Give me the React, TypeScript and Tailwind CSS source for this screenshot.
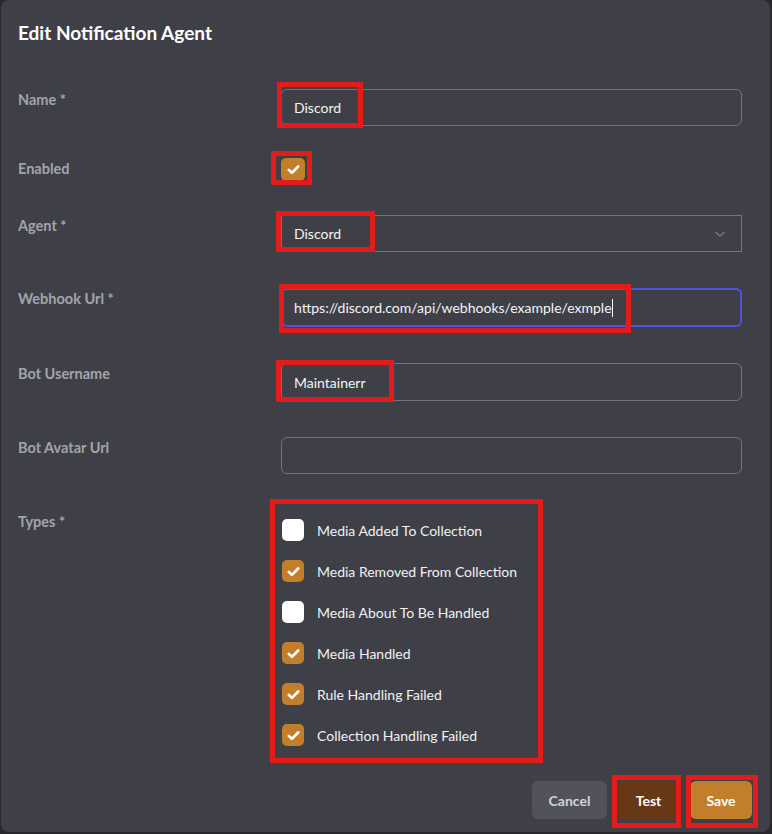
import React from "react";

const ORANGE = "bg-[#c27e2b]";

function Check({ size = "w-[22px] h-[22px]" }: { size?: string }) {
  return (
    <span className={`${size} ${ORANGE} rounded-[5px] flex items-center justify-center shrink-0`}>
      <svg width="15" height="15" viewBox="0 0 16 16" fill="none">
        <path d="M3 8.4 L6.3 11.6 L13 4.8" stroke="white" strokeWidth="2.9" strokeLinecap="round" strokeLinejoin="round" />
      </svg>
    </span>
  );
}

function Empty() {
  return <span className="w-[22px] h-[22px] bg-white rounded-[5px] shrink-0" />;
}

function Row({ label, className = "", children }: { label: string; className?: string; children: React.ReactNode }) {
  return (
    <div className={`flex ${className}`}>
      <label className="w-[263px] shrink-0 pt-[1px] text-[14.5px] leading-[19px] font-bold text-[#a3a3ab]">{label}</label>
      <div className="flex-1">{children}</div>
    </div>
  );
}

const types: [string, boolean][] = [
  ["Media Added To Collection", false],
  ["Media Removed From Collection", true],
  ["Media About To Be Handled", false],
  ["Media Handled", true],
  ["Rule Handling Failed", true],
  ["Collection Handling Failed", true],
];

// annotation boxes drawn over the screenshot
const marks = [
  "left-[277px] top-[82px] w-[86px] h-[46px]",
  "left-[271px] top-[151px] w-[41px] h-[34px]",
  "left-[276px] top-[211px] w-[99px] h-[41px]",
  "left-[279px] top-[284px] w-[352px] h-[49px]",
  "left-[276px] top-[360px] w-[118px] h-[42px]",
  "left-[270px] top-[499px] w-[273px] h-[264px]",
  "left-[612px] top-[775px] w-[69px] h-[53px]",
  "left-[686px] top-[775px] w-[72px] h-[53px]",
];

export default function App() {
  return (
    <div
      className="relative w-[772px] h-[834px] bg-[#27282c] overflow-hidden"
      style={{ fontFamily: "Lato, 'Noto Sans', sans-serif" }}
    >
      <div className="ml-[1px] w-[769px] h-[832px] bg-[#3f4047] rounded-[8px] pl-[17px] pr-[28px] flex flex-col">
        <h2 className="pt-[19px] text-[19px] leading-[27px] font-bold text-white">Edit Notification Agent</h2>

        <Row label="Name *" className="mt-[43px]">
          <div className="h-[37px] rounded-[6px] border border-[#74747c] px-[12px] flex items-center text-[14px] text-[#f4f4f5]">
            Discord
          </div>
        </Row>

        <Row label="Enabled" className="mt-[32px]">
          <Check size="w-[24px] h-[23px]" />
        </Row>

        <Row label="Agent *" className="mt-[34px]">
          <div className="h-[37px] border border-[#74747c] px-[12px] flex items-center justify-between text-[14px] text-[#f4f4f5]">
            <span>Discord</span>
            <svg width="12" height="12" viewBox="0 0 12 12" fill="none" className="mr-[3px]">
              <path d="M1.5 4 L6 8 L10.5 4" stroke="#7c7c85" strokeWidth="1.3" />
            </svg>
          </div>
        </Row>

        <Row label="Webhook Url *" className="mt-[36px]">
          <div className="h-[39px] rounded-[6px] border-2 border-[#5152e2] px-[11px] flex items-center text-[14px] text-[#f4f4f5]">
            <span>https://discord.com/api/webhooks/example/exmple</span>
            <span className="w-[1px] h-[18px] bg-white" />
          </div>
        </Row>

        <Row label="Bot Username" className="mt-[36px]">
          <div className="h-[38px] rounded-[6px] border border-[#74747c] px-[12px] flex items-center text-[14px] text-[#f4f4f5]">
            Maintainerr
          </div>
        </Row>

        <Row label="Bot Avatar Url" className="mt-[36px]">
          <div className="h-[37px] rounded-[6px] border border-[#74747c]" />
        </Row>

        <Row label="Types *" className="mt-[37px]">
          <div className="-mt-[1px]">
            {types.map(([t, on]) => (
              <div key={t} className="h-[41px] flex items-center gap-[13px] pl-[1px] border-b border-[#414249]">
                {on ? <Check /> : <Empty />}
                <span className="text-[14px] text-[#f1f1f3]">{t}</span>
              </div>
            ))}
          </div>
        </Row>

        <div className="mt-[25px] flex justify-end gap-[10px] -mr-[10px]">
          <button className="w-[75px] h-[38px] rounded-[6px] bg-[#52525b] text-[14px] font-bold text-[#d4d4d8]">Cancel</button>
          <button className="w-[63px] h-[38px] rounded-[6px] bg-[#683716] text-[14px] font-bold text-white">Test</button>
          <button className="w-[62px] h-[38px] rounded-[6px] bg-[#c27e2b] text-[14px] font-bold text-white">Save</button>
        </div>
      </div>

      {marks.map((m) => (
        <div key={m} className={`absolute ${m} border-[5px] border-[#e41b1b] pointer-events-none`} />
      ))}
    </div>
  );
}
